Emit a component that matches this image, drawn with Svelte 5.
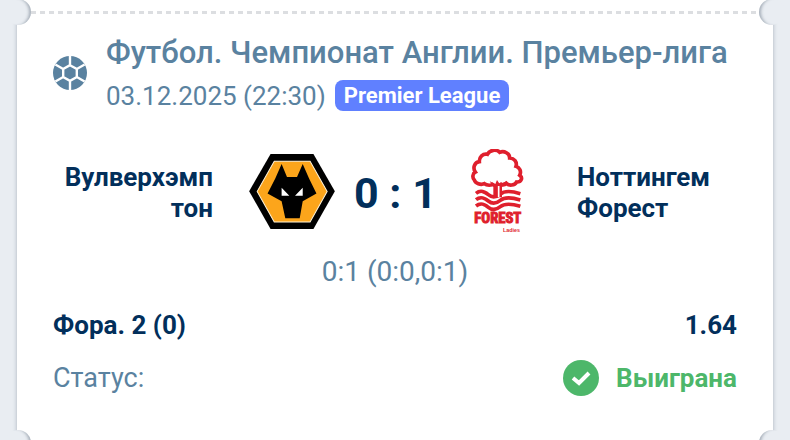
<script lang="ts">
  const event = {
    title: 'Футбол. Чемпионат Англии. Премьер-лига',
    date: '03.12.2025 (22:30)',
    league: 'Premier League',
    home: 'Вулверхэмптон',
    away: 'Ноттингем Форест',
    score: '0 : 1',
    periods: '0:1 (0:0,0:1)',
    market: 'Фора. 2 (0)',
    odds: '1.64',
    status: 'Выиграна'
  }
</script>

<main class="page">
  <article class="ticket">
    <div class="tear"></div>

    <div class="body">
      <header class="event">
        <svg class="ball" viewBox="0 0 100 100" aria-hidden="true">
          <circle cx="50" cy="50" r="50" />
          <path d="M50 0V27 M50 73V100 M50 27L70 38V62L50 73L30 62V38Z M30 38L7 25 M70 38L93 25 M70 62L93 75 M30 62L7 75" />
        </svg>
        <div>
          <h1>{event.title}</h1>
          <div class="meta">
            <time datetime="2025-12-03T22:30">{event.date}</time>
            <span class="badge">{event.league}</span>
          </div>
        </div>
      </header>

      <section class="match">
        <div class="team home">{event.home}</div>
        <svg class="wolves" viewBox="28 42 256 224" role="img" aria-label={event.home}>
          <path d="M92 42H220L284 153L220 266H92L28 153Z" />
          <path d="M103 64H210L261 154L210 245H103L52 154Z" fill="#fca51b" stroke="#fff3d8" stroke-width="3" />
          <path d="M125 72L141 111H171L188 72L207 115L229 160L188 183L179 234H136L125 183L83 160L106 115Z" />
          <path d="M125 143L148 167H125Z M188 143V167H165Z" fill="#fff" />
        </svg>
        <div class="score">{event.score}</div>
        <svg class="forest" viewBox="48 27 162 252" role="img" aria-label={event.away}>
          <path
            class="crown"
            d="M117 130C110 138 95 137 88 131C77 136 61 130 58 120C51 113 53 100 61 96C52 83 59 67 73 65C72 51 84 40 97 43C104 29 125 27 134 37C148 31 164 41 164 54C178 55 187 66 183 79C194 82 200 95 194 106C205 114 198 127 185 126C179 137 162 138 154 130C147 137 139 136 134 129"
          />
          <path d="M104 124L121 132L126 120L134 132L156 123L141 141V172H115V141Z" />
          <g class="water">
            <path d="M63 160C77 149 88 154 100 164S125 171 136 162S164 151 196 161" />
            <path d="M63 179C77 168 88 173 100 183S125 190 136 181S164 170 196 180" />
            <path d="M63 198C77 187 88 192 100 202S125 209 136 200S164 189 196 199" />
          </g>
          <path d="M131 138V171" class="trunk" />
          <text x="58" y="249" class="name">FOREST</text>
          <text x="144" y="275" class="sub">Ladies</text>
        </svg>
        <div class="team away">{event.away}</div>
      </section>

      <p class="periods">{event.periods}</p>

      <dl>
        <div class="row bet">
          <dt>{event.market}</dt>
          <dd>{event.odds}</dd>
        </div>
        <div class="row">
          <dt class="label">Статус:</dt>
          <dd class="won">
            <svg viewBox="0 0 36 36" aria-hidden="true">
              <circle cx="18" cy="18" r="18" />
              <path d="M10 18L16 23L26 13" />
            </svg>
            {event.status}
          </dd>
        </div>
      </dl>
    </div>

    <div class="tear"></div>
  </article>
</main>

<style>
  :global(body) {
    margin: 0;
    background: #e9edf2;
  }

  .page {
    height: 100vh;
    overflow: hidden;
    padding: 0 17px;
    font-family: Roboto, "Liberation Sans", sans-serif;
    color: #5a82a0;
  }

  .ticket {
    background: #fff;
    box-shadow: 0 0 4px rgba(50, 65, 85, 0.35);
  }

  .tear {
    position: relative;
    height: 26px;
    background: repeating-linear-gradient(90deg, #dcdee1 0 5px, transparent 5px 9px) 14px 11px / calc(100% - 28px) 3px no-repeat;
  }

  .tear::before,
  .tear::after {
    content: '';
    position: absolute;
    top: -1px;
    width: 26px;
    height: 26px;
    border-radius: 50%;
    background: #e9edf2;
  }

  .tear::before {
    left: -12px;
    box-shadow: inset -4px 0 3px -2px rgba(50, 65, 85, 0.35);
  }

  .tear::after {
    right: -12px;
    box-shadow: inset 4px 0 3px -2px rgba(50, 65, 85, 0.35);
  }

  .body {
    padding: 8px 36px 35px;
  }

  .event {
    display: flex;
    align-items: center;
    gap: 19px;
  }

  .ball {
    width: 34px;
    height: 34px;
    flex: none;
    fill: #5a82a0;
  }

  .ball path {
    fill: none;
    stroke: #fff;
    stroke-width: 7;
  }

  h1 {
    margin: 0;
    font-size: 31px;
    line-height: 38px;
    font-weight: 500;
    white-space: nowrap;
  }

  .meta {
    display: flex;
    align-items: center;
    gap: 9px;
    margin-top: 6px;
    font-size: 26px;
    line-height: 32px;
  }

  time {
    padding-top: 2px;
  }

  .badge {
    padding: 0 9px;
    border-radius: 8px;
    background: #6080ff;
    color: #fff;
    font-size: 22px;
    line-height: 31px;
    font-weight: 700;
  }

  .match {
    display: grid;
    grid-template-columns: 1fr 124px 82px 124px 1fr;
    align-items: center;
    margin-top: 37px;
    color: #022f5b;
  }

  .team {
    padding-top: 4px;
    font-size: 26px;
    line-height: 31px;
    font-weight: 700;
    overflow-wrap: anywhere;
  }

  .home {
    padding-right: 17px;
    text-align: right;
  }

  .away {
    padding-left: 17px;
  }

  .wolves,
  .forest {
    justify-self: center;
  }

  .wolves {
    width: 86px;
    height: 75px;
    fill: #000;
  }

  .forest {
    width: 54px;
    height: 84px;
    fill: #df1f2d;
  }

  .crown,
  .water {
    fill: none;
    stroke: #df1f2d;
    stroke-width: 11;
  }

  .trunk {
    stroke: #fff;
    stroke-width: 5;
  }

  .name {
    font: 700 44px "Liberation Sans Narrow", "Roboto Condensed", sans-serif;
    stroke: #df1f2d;
    stroke-width: 3;
  }

  .sub {
    font: 700 16px "Liberation Sans", sans-serif;
  }

  .score {
    padding-top: 4px;
    font-size: 43px;
    line-height: 50px;
    font-weight: 700;
    text-align: center;
    white-space: nowrap;
  }

  .periods {
    margin: 23px 0 0;
    font-size: 28px;
    line-height: 32px;
    text-align: center;
  }

  dl {
    margin: 19px 0 0;
  }

  .row {
    display: flex;
    justify-content: space-between;
    align-items: center;
    font-size: 26px;
    line-height: 36px;
  }

  .row + .row {
    margin-top: 17px;
  }

  .bet {
    color: #022f5b;
    font-weight: 700;
  }

  .label {
    font-size: 27px;
  }

  dd {
    margin: 0;
  }

  .won {
    display: flex;
    align-items: center;
    gap: 17px;
    color: #4db76a;
    font-weight: 700;
  }

  .won svg {
    width: 36px;
    height: 36px;
    fill: #4db76a;
  }

  .won path {
    fill: none;
    stroke: #fff;
    stroke-width: 4;
  }
</style>
